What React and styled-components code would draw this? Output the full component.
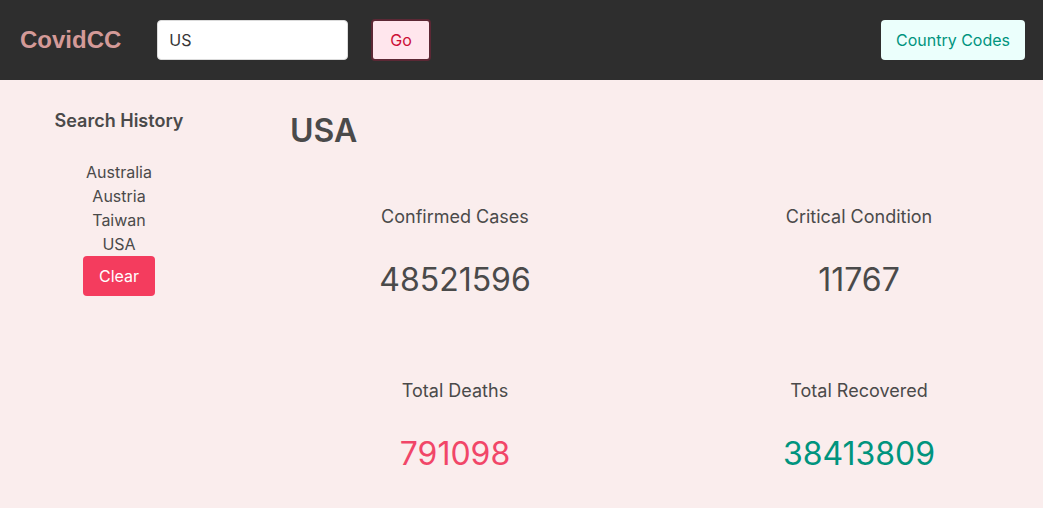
import React, { useState } from 'react';
import styled, { createGlobalStyle } from 'styled-components';

const GlobalStyle = createGlobalStyle`
    body {
        margin: 0;
        font-family: Inter, "Noto Sans", sans-serif;
        color: #4a4a4a;
        background-color: #faeded;
    }
`;

const Navbar = styled.nav`
    height: 80px;
    background-color: #2e2e2e;
    display: flex;
    align-items: center;
    padding: 0 18px 0 20px;
    box-sizing: border-box;
`;

const Logo = styled.div`
    font-family: "Liberation Sans", Arial, sans-serif;
    font-size: 24px;
    font-weight: 700;
    color: #d49a98;
    margin-right: 36px;
`;

const SearchInput = styled.input`
    width: 191px;
    height: 40px;
    box-sizing: border-box;
    border: 1px solid #dbdbdb;
    border-radius: 4px;
    padding: 0 11px;
    font-family: inherit;
    font-size: 16px;
    color: #363636;
    outline: none;
`;

const Button = styled.button`
    height: ${(p) => p.h || 40}px;
    padding: 0 ${(p) => p.px || 16}px;
    border-radius: 4px;
    border: ${(p) => p.border || 'none'};
    background-color: ${(p) => p.bg};
    color: ${(p) => p.fg};
    font-family: inherit;
    font-size: 16px;
    cursor: pointer;
    box-sizing: border-box;
`;

const GoButton = styled(Button)`
    margin-left: 23px;
`;

const Spacer = styled.div`
    flex: 1;
`;

const Page = styled.div`
    display: flex;
    min-height: calc(100vh - 80px);
`;

const Sidebar = styled.aside`
    width: 238px;
    flex-shrink: 0;
    display: flex;
    flex-direction: column;
    align-items: center;
    box-sizing: border-box;
    padding-top: 28px;
`;

const SideTitle = styled.h3`
    margin: 0 0 26px;
    font-size: 18px;
    font-weight: 600;
    line-height: 26px;
`;

const HistoryItem = styled.div`
    font-size: 16px;
    line-height: 24px;
`;

const Main = styled.main`
    flex: 1;
    padding: 30px 19px 0 52px;
`;

const Country = styled.h1`
    margin: 0 0 52px;
    font-size: 32px;
    font-weight: 600;
    line-height: 42px;
    color: #4a4a4a;
`;

const StatGrid = styled.div`
    display: grid;
    grid-template-columns: 1fr 1fr;
    column-gap: 74px;
    row-gap: 78px;
`;

const Stat = styled.div`
    text-align: center;
`;

const StatLabel = styled.div`
    font-size: 18px;
    line-height: 26px;
    margin-bottom: 30px;
`;

const StatValue = styled.div`
    font-size: 32px;
    line-height: 40px;
    color: ${(p) => p.color || '#4a4a4a'};
`;

const stats = [
    { label: 'Confirmed Cases', value: 48521596 },
    { label: 'Critical Condition', value: 11767 },
    { label: 'Total Deaths', value: 791098, color: '#f14668' },
    { label: 'Total Recovered', value: 38413809, color: '#00947e' },
];

const App = () => {
    const [query, setQuery] = useState('US');
    const [history, setHistory] = useState(['Australia', 'Austria', 'Taiwan', 'USA']);

    return (
        <>
            <GlobalStyle />
            <Navbar>
                <Logo>CovidCC</Logo>
                <SearchInput value={query} onChange={(e) => setQuery(e.target.value)} />
                <GoButton h={42} px={17} bg="#ffe6ed" fg="#cc0f35" border="2px solid #5c2835">
                    Go
                </GoButton>
                <Spacer />
                <Button bg="#ebfffc" fg="#00947e" px={15}>
                    Country Codes
                </Button>
            </Navbar>
            <Page>
                <Sidebar>
                    <SideTitle>Search History</SideTitle>
                    {history.map((c) => (
                        <HistoryItem key={c}>{c}</HistoryItem>
                    ))}
                    <Button bg="#f43c5e" fg="#fff" onClick={() => setHistory([])}>
                        Clear
                    </Button>
                </Sidebar>
                <Main>
                    <Country>USA</Country>
                    <StatGrid>
                        {stats.map((s) => (
                            <Stat key={s.label}>
                                <StatLabel>{s.label}</StatLabel>
                                <StatValue color={s.color}>{s.value}</StatValue>
                            </Stat>
                        ))}
                    </StatGrid>
                </Main>
            </Page>
        </>
    );
};

export default App;
